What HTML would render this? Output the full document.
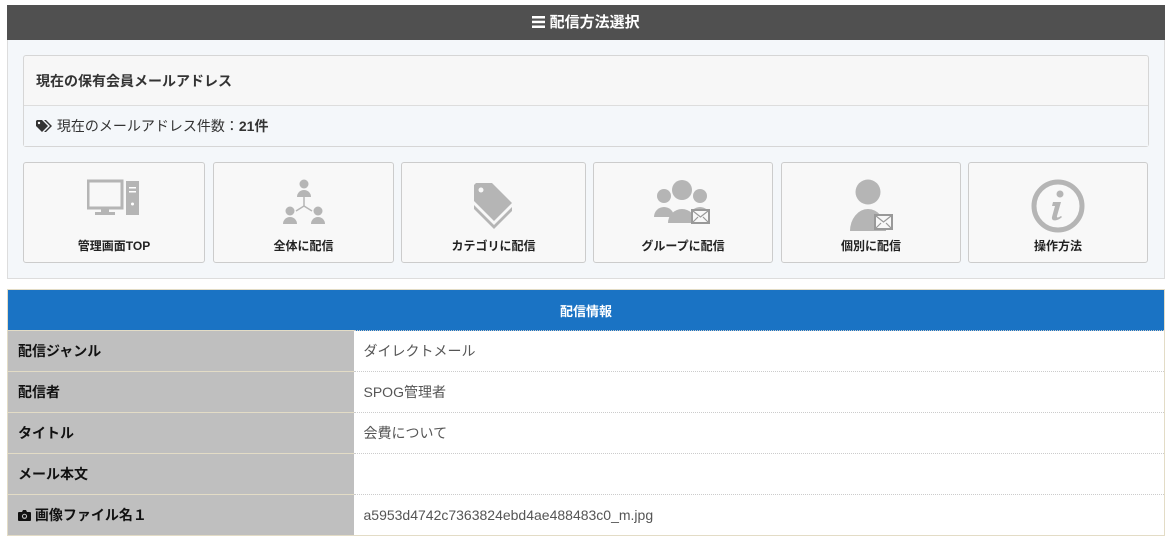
<!DOCTYPE html>
<html><head><meta charset="utf-8"><style>
*{box-sizing:border-box;margin:0;padding:0}
body{width:1172px;height:540px;background:#fff;font-family:"Liberation Sans","Noto Sans CJK JP",sans-serif;font-size:13px;color:#333;position:relative;overflow:hidden}
.abs{position:absolute}
.hdr{left:7px;top:5px;width:1158px;height:35px;background:#505050;color:#fff;font-size:15px;text-align:center;line-height:35px;font-weight:bold}
.pbody{left:7px;top:40px;width:1158px;height:239px;background:#f4f7fa;border:1px solid #ddd;border-top:none}
.box{left:23px;top:55px;width:1126px;height:92px;border:1px solid #d6d6d6;border-radius:3px;background:#f7f7f7}
.box .t{height:50px;line-height:50px;padding-left:12px;font-weight:bold;font-size:14px;border-bottom:1px solid #ddd;color:#333}
.box .c{height:40px;line-height:40px;padding-left:12px;background:#f4f7fa;font-size:14px}
.tile{top:162px;height:101px;border:1px solid #ccc;border-radius:3px;background:#f8f8f8;text-align:center;font-weight:bold;font-size:12px;color:#222}
.tile svg{position:absolute;left:50%;top:16px;transform:translateX(-50%)}
.tile span{position:absolute;left:0;right:0;top:74px}
table{position:absolute;left:7px;top:289px;width:1158px;border-collapse:collapse;border:1px solid #e3dcc6}
th{background:#1a73c4;color:#fff;height:41px;font-size:13px}
td{height:41px;padding-left:10px;font-size:14px}
td.l{width:346px;background:#bfbfbf;font-weight:bold;color:#111;border-top:1px solid #e3dcc6}
td.v{background:#fff;color:#555;border-top:1px dotted #ccc}
</style></head><body>
<div class="abs hdr"><svg width="13" height="12" viewBox="0 0 13 12" style="vertical-align:-1px"><rect y="0" width="13" height="2.5" fill="#fff"/><rect y="4.7" width="13" height="2.5" fill="#fff"/><rect y="9.5" width="13" height="2.5" fill="#fff"/></svg> 配信方法選択</div>
<div class="abs pbody"></div>
<div class="abs box"><div class="t">現在の保有会員メールアドレス</div><div class="c"><svg width="17" height="13" viewBox="0 0 17 13" style="vertical-align:-2px"><path d="M0 1v5l6 6 6-6-6-6H1z" fill="#333"/><circle cx="3" cy="3" r="1.2" fill="#fff"/><path d="M8 0l6 6-6 6h2l6-6-6-6z" fill="#333"/></svg> 現在のメールアドレス件数：<b>21件</b></div></div>

<div class="abs tile" style="left:23px;width:182px"><svg width="54" height="40" viewBox="0 0 54 40"><rect x="1" y="2" width="34" height="27" fill="none" stroke="#b5b5b5" stroke-width="3"/><rect x="14" y="29" width="8" height="5" fill="#b5b5b5"/><rect x="8" y="33" width="20" height="3" fill="#b5b5b5"/><rect x="39" y="2" width="13" height="34" fill="#b5b5b5"/><rect x="42" y="8" width="7" height="1.5" fill="#fff"/><rect x="42" y="12" width="7" height="1.5" fill="#fff"/><circle cx="45.5" cy="25" r="1.5" fill="#fff"/></svg><span>管理画面TOP</span></div>
<div class="abs tile" style="left:213px;width:181px"><svg width="46" height="48" viewBox="0 0 46 48"><g fill="#b5b5b5"><circle cx="23" cy="5" r="4.5"/><path d="M16 18a7 7 0 0 1 14 0z"/><circle cx="9" cy="32" r="4.5"/><path d="M2 45a7 7 0 0 1 14 0z"/><circle cx="37" cy="32" r="4.5"/><path d="M30 45a7 7 0 0 1 14 0z"/></g><path d="M23 18v9l-8 5M23 27l8 5" stroke="#b5b5b5" stroke-width="1.5" fill="none"/></svg><span>全体に配信</span></div>
<div class="abs tile" style="left:401px;width:185px"><svg width="44" height="54" viewBox="0 0 44 54"><path d="M2 6V22l20 20 18-18L20 4H4z" fill="#b5b5b5"/><circle cx="9" cy="11" r="2.5" fill="#f8f8f8"/><path d="M2 26l20 20 18-18v4L22 50 2 30z" fill="#b5b5b5"/></svg><span>カテゴリに配信</span></div>
<div class="abs tile" style="left:593px;width:180px"><svg width="58" height="46" viewBox="0 0 58 46"><g fill="#b5b5b5"><circle cx="10" cy="17" r="7"/><path d="M0 38a10 10 0 0 1 20 0z"/><circle cx="46" cy="17" r="7"/><path d="M36 38a10 10 0 0 1 20 0z"/><circle cx="28" cy="11" r="10"/><path d="M14 44a14 14 0 0 1 28 0z"/></g><rect x="38" y="31" width="17" height="13" fill="#f8f8f8" stroke="#999" stroke-width="2"/><path d="M39 32l7.5 6 7.5-6M39 43l5-5M54 43l-5-5" stroke="#999" stroke-width="1.2" fill="none"/></svg><span>グループに配信</span></div>
<div class="abs tile" style="left:781px;width:180px"><svg width="46" height="54" viewBox="0 0 46 54"><g fill="#b5b5b5"><circle cx="20" cy="13" r="12.5"/><path d="M2 52a18 22 0 0 1 36 0z"/></g><rect x="27" y="36" width="17" height="14" fill="#f8f8f8" stroke="#999" stroke-width="2"/><path d="M28 37l7.5 6 7.5-6M28 49l5-5M43 49l-5-5" stroke="#999" stroke-width="1.2" fill="none"/></svg><span>個別に配信</span></div>
<div class="abs tile" style="left:968px;width:180px"><svg width="54" height="54" viewBox="0 0 54 54"><circle cx="27" cy="27" r="24" fill="none" stroke="#b5b5b5" stroke-width="5"/><circle cx="29" cy="15" r="3.5" fill="#b5b5b5"/><path d="M22 23h8l-4 14c-.5 2 1 2 4 0l1 1c-4 4-11 5-10 0l3-11h-3z" fill="#b5b5b5"/></svg><span>操作方法</span></div>

<table>
<tr><th colspan="2">配信情報</th></tr>
<tr><td class="l">配信ジャンル</td><td class="v">ダイレクトメール</td></tr>
<tr><td class="l">配信者</td><td class="v">SPOG管理者</td></tr>
<tr><td class="l">タイトル</td><td class="v">会費について</td></tr>
<tr><td class="l">メール本文</td><td class="v"></td></tr>
<tr><td class="l"><svg width="13" height="11" viewBox="0 0 13 11" style="vertical-align:-1px"><path d="M1 2h3l1-2h3l1 2h3a1 1 0 0 1 1 1v7a1 1 0 0 1-1 1H1a1 1 0 0 1-1-1V3a1 1 0 0 1 1-1z" fill="#111"/><circle cx="6.5" cy="6.3" r="2.6" fill="#bfbfbf"/><circle cx="6.5" cy="6.3" r="1.5" fill="#111"/></svg> 画像ファイル名１</td><td class="v">a5953d4742c7363824ebd4ae488483c0_m.jpg</td></tr>
</table>
</body></html>
